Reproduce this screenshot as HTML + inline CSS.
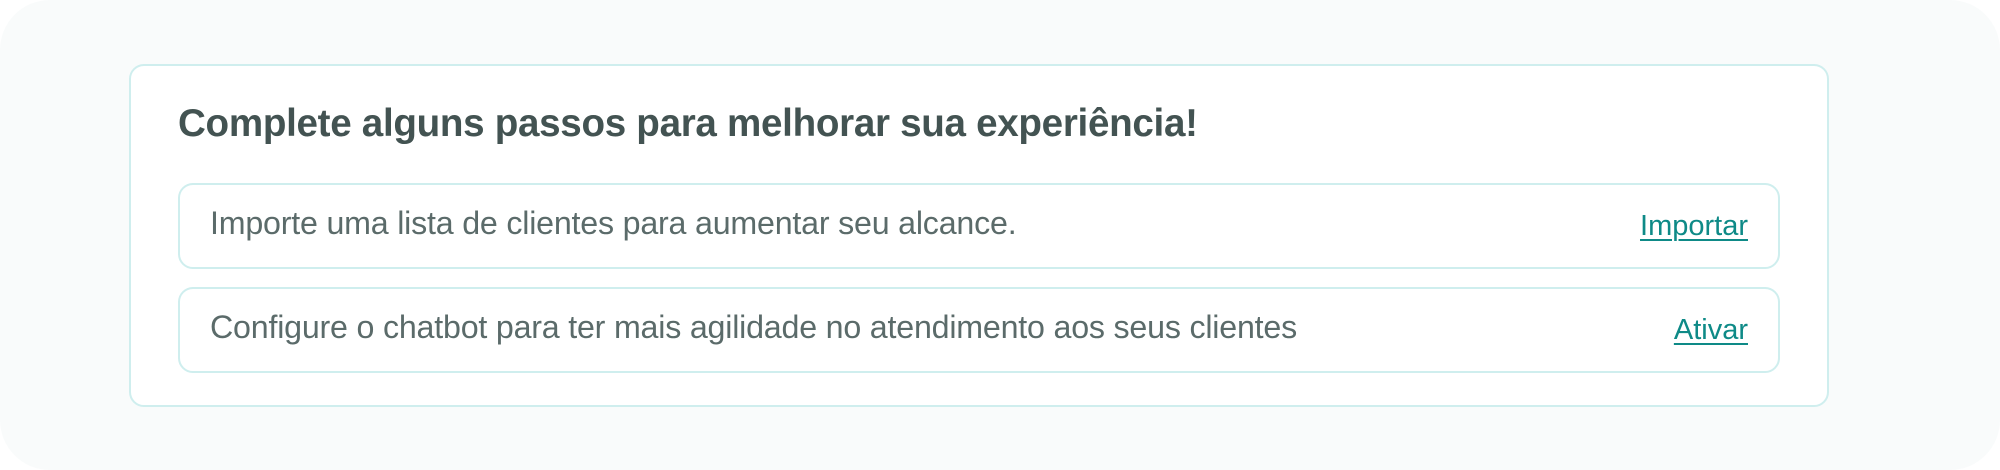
<!DOCTYPE html>
<html><head><meta charset="utf-8"><style>
html,body{margin:0;padding:0;width:2000px;height:470px;overflow:hidden;background:#fff}
.bg{position:absolute;left:0;top:0;width:2000px;height:470px;background:#f9fbfb;border-radius:50px}
.card{position:absolute;left:129px;top:64px;width:1696px;height:339px;background:#fff;border:2px solid #cfeeee;border-radius:15px}
h1{position:absolute;left:47px;top:36px;margin:0;font:bold 38.6px "Liberation Sans",sans-serif;color:#435352;white-space:nowrap;letter-spacing:-0.3px}
.row{position:absolute;left:47px;width:1598px;height:82px;border:2px solid #cfeeee;border-radius:15px}
.row span{position:absolute;left:30px;top:20px;font:32.2px "Liberation Sans",sans-serif;color:#5b6b6a;white-space:nowrap;letter-spacing:-0.2px}
.row a{position:absolute;right:30px;top:25px;font:29px "Liberation Sans",sans-serif;color:#0e8a87;text-decoration:underline;text-underline-offset:4px;text-decoration-thickness:2px}
</style></head><body>
<div class="bg"></div>
<div class="card">
<h1>Complete alguns passos para melhorar sua experiência!</h1>
<div class="row" style="top:117px"><span>Importe uma lista de clientes para aumentar seu alcance.</span><a>Importar</a></div>
<div class="row" style="top:221px"><span>Configure o chatbot para ter mais agilidade no atendimento aos seus clientes</span><a>Ativar</a></div>
</div>
</body></html>
